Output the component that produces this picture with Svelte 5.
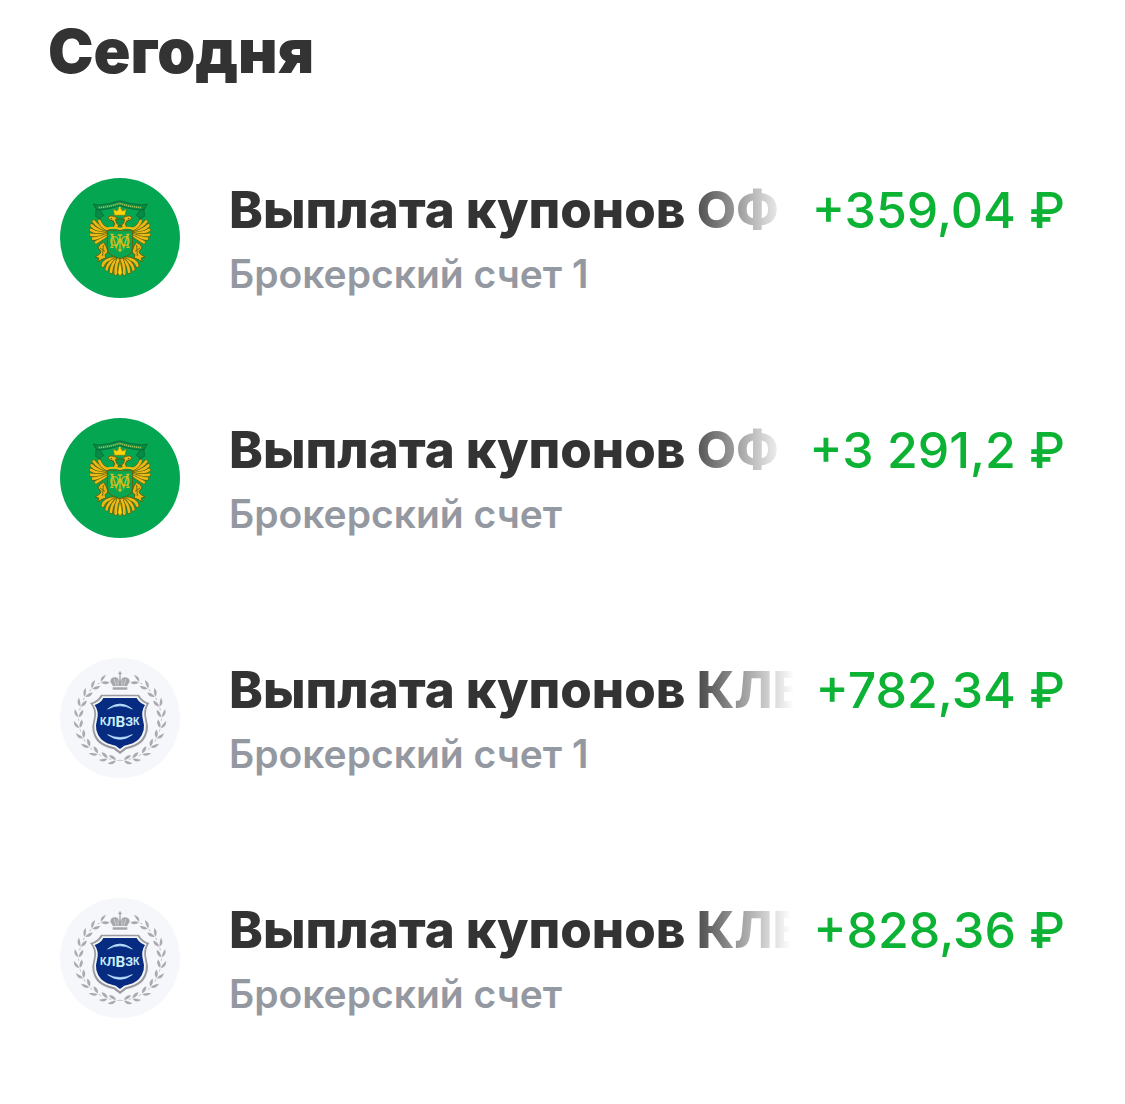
<script>
  const payments = [
    { issuer: 'ofz', title: 'Выплата купонов ОФ', account: 'Брокерский счет 1', amount: '+359,04 ₽' },
    { issuer: 'ofz', title: 'Выплата купонов ОФ', account: 'Брокерский счет', amount: '+3 291,2 ₽' },
    { issuer: 'klvz', title: 'Выплата купонов КЛВ', account: 'Брокерский счет 1', amount: '+782,34 ₽' },
    { issuer: 'klvz', title: 'Выплата купонов КЛВ', account: 'Брокерский счет', amount: '+828,36 ₽' },
  ];

  const leafAngles = [27, 42, 57, 72, 87, 102, 117, 132, 147, 162, 174];

  const feathers = [
    'M170 202 Q150 216 138 223',
    'M168 196 Q142 212 129 212',
    'M167 192 Q138 204 123 200',
    'M166 189 Q136 196 123 186',
    'M165 187 Q136 186 125 172',
    'M166 184 Q144 178 131 160',
    'M172 183 Q156 178 148 159',
  ];

  const tail = [
    'M200 272 Q164 270 158 293',
    'M202 272 Q172 282 170 304',
    'M204 273 Q184 286 183 312',
    'M206 273 Q196 292 197 317',
  ];
</script>

{#snippet eagleHalf()}
  {#each [...feathers, ...tail] as d}
    <path class="feather-edge" {d} />
    <path class="feather" {d} />
  {/each}
  <path class="gold" d="M202 181 L190 177 Q197 168 190 159 L180 156 L173 149 Q181 140 193 145 Q207 151 207 169 L202 181Z" />
  <path class="gold" d="M161 223 Q148 226 144 240 L153 250 L149 258 L135 267 L146 270 L143 282 L156 274 L168 270 L165 260 L174 252 L169 236Z" />
  <path class="ink" d="M150 240 L165 250 M160 231 L158 264" />
  <circle cx="184" cy="152" r="2" class="mark" />
{/snippet}

{#snippet ofzLogo()}
  <svg class="logo" viewBox="30 30 360 360" aria-hidden="true">
    <circle cx="210" cy="210" r="180" fill="#05a651" />
    <path class="ribbon" d="M138 124 L150 126 L161 143 L149 149 L153 154 L137 145 Z M282 124 L270 126 L259 143 L271 149 L267 154 L283 145Z" />
    <path class="ribbon" d="M130 108 L146 111 Q181 108 209 98 Q240 108 276 111 L292 108 L284 123 L269 126 Q235 123 209 113 Q181 123 151 126 L138 123Z" />
    <path d="M146 119 Q181 116 209 106 Q240 116 274 119" fill="none" stroke="#a2be50" stroke-width="5" stroke-dasharray="4 2" />
    {@render eagleHalf()}
    <g transform="matrix(-1 0 0 1 420 0)">{@render eagleHalf()}</g>
    <path d="M193 142 L190 123 L201 129 L209 117 L218 129 L229 123 L225 142Z" fill="#fcd20d" stroke="#7c7815" stroke-width="2" />
    <circle cx="209" cy="119" r="3" fill="#ffcf18" />
    <path d="M197 153 L223 153 Q224 168 210 174 Q197 168 197 153Z" fill="#099b48" stroke="#57630e" stroke-width="3" />
    <path d="M172 187 H248 V240 Q247 258 229 265 L210 272 L191 265 Q173 258 172 240Z" fill="#08a64e" stroke="#675f0c" stroke-width="3" />
    <path d="M168 183 Q192 175 210 183 Q230 175 252 183" fill="none" stroke="#f3bc10" stroke-width="6" />
    <path class="cipher" d="M186 199 V238 M181 199 H191 M181 238 H191 M234 199 V238 M229 199 H239 M229 238 H239 M188 202 L199 239 L210 211 L221 239 L232 202 M203 201 H217 M210 201 V252 M204 246 H216" />
    <ellipse class="cipher" cx="194" cy="219" rx="11" ry="13" />
    <ellipse class="cipher" cx="226" cy="219" rx="11" ry="13" />
    <path d="M210 274 L203 314 L210 325 L217 314Z" fill="#ffd10a" stroke="#7c650a" stroke-width="2" />
  </svg>
{/snippet}

{#snippet klvzLogo()}
  <svg class="logo" viewBox="30 30 360 360" aria-hidden="true">
    <circle cx="210" cy="210" r="180" fill="#f5f7fb" />
    {#each [-1, 1] as side}
      <g transform="matrix({side} 0 0 1 {side === 1 ? 0 : 420} 0)">
        {#each leafAngles as angle}
          <g class="leaf" transform="rotate({angle} 210 213)">
            <path d="M211 88 Q201 87 187 76 Q207 72 211 88Z" />
            <path d="M211 90 Q197 88 188 101 Q204 105 211 90Z" />
            <path d="M211 89 L222 91 L222 88Z" />
          </g>
        {/each}
      </g>
    {/each}
    <path d="M188 118 H232 V125 H188Z M189 114 L181 101 Q182 88 195 88 Q205 89 208 98 V85 H212 V98 Q216 88 226 88 Q239 89 239 101 L231 114Z" fill="#a5a6aa" />
    <path d="M210 70 V86 M205 76 H215" fill="none" stroke="#929397" stroke-width="3" />
    <path d="M193 93 L198 113 M227 93 L222 113 M204 94 V113 M216 94 V113" fill="none" stroke="#e4e5e8" stroke-width="2" />
    <path d="M120 165 Q142 160 153 140 H267 Q278 160 298 165 Q283 184 290 214 Q302 253 277 281 Q260 297 229 304 L210 318 L191 304 Q160 297 143 281 Q119 253 131 214 Q138 184 120 165Z" fill="#999b9f" />
    <path d="M128 168 Q148 162 157 145 H263 Q273 162 290 168 Q278 187 285 215 Q295 249 272 277 Q256 292 226 298 L210 310 L194 298 Q164 292 148 277 Q125 249 136 215 Q143 187 128 168Z" fill="#f4f5f7" />
    <path d="M134 171 Q153 165 160 150 H260 Q268 165 285 171 Q272 190 279 216 Q289 247 267 273 Q252 288 223 293 L210 303 L197 293 Q168 288 153 273 Q131 247 141 216 Q148 190 134 171Z" fill="#062b80" />
    <path d="M173 183 Q210 153 247 183 Q210 164 173 183Z M173 260 Q210 288 247 260 Q210 277 173 260Z" fill="#b9e0ff" stroke="#b9e0ff" stroke-width="2" />
    <text class="brand" x="150" y="232"><tspan font-size="30">К</tspan><tspan font-size="38" dy="3">Л</tspan><tspan font-size="46" dy="3">В</tspan><tspan font-size="38" dy="-3">З</tspan><tspan font-size="30" dy="-3">К</tspan></text>
  </svg>
{/snippet}

<main>
  <h1>Сегодня</h1>
  <ul>
    {#each payments as payment}
      <li>
        {#if payment.issuer === 'ofz'}
          {@render ofzLogo()}
        {:else}
          {@render klvzLogo()}
        {/if}
        <div class="details">
          <div class="headline">
            <h2>{payment.title}</h2>
            <span class="amount">{payment.amount}</span>
          </div>
          <p>{payment.account}</p>
        </div>
      </li>
    {/each}
  </ul>
</main>

<style>
  :global(body) {
    margin: 0;
    background: #fff;
  }
  main {
    padding: 15px 60px 80px;
    font-family: Inter, 'Liberation Sans', sans-serif;
    color: #333;
  }
  h1, h2, p, ul {
    margin: 0;
    padding: 0;
  }
  h1 {
    margin-left: -12px;
    font-size: 61px;
    line-height: 72px;
    font-weight: 900;
  }
  ul {
    display: flex;
    flex-direction: column;
    gap: 118px;
    margin-top: 91px;
    list-style: none;
  }
  li {
    display: flex;
    align-items: flex-start;
    gap: 49px;
  }
  .logo {
    flex: none;
    width: 120px;
    height: 120px;
  }
  .details {
    flex: 1;
    min-width: 0;
  }
  .headline {
    display: flex;
    gap: 22px;
    line-height: 64px;
    white-space: nowrap;
  }
  h2 {
    flex: 1;
    min-width: 0;
    overflow: hidden;
    font-size: 51px;
    font-weight: 800;
    mask-image: linear-gradient(to right, #000 calc(100% - 108px), transparent);
  }
  .amount {
    color: #0cb233;
    font-size: 50px;
    font-weight: 500;
  }
  p {
    margin-top: 6px;
    font-size: 39px;
    line-height: 52px;
    font-weight: 600;
    color: #9498a1;
  }
  .gold {
    fill: #eab617;
    stroke: #60610f;
    stroke-width: 3;
    stroke-linejoin: round;
  }
  .feather-edge,
  .feather {
    fill: none;
    stroke: #5c640f;
    stroke-width: 12;
    stroke-linecap: round;
  }
  .feather {
    stroke: #edb916;
    stroke-width: 8;
  }
  .ink {
    fill: none;
    stroke: #75680d;
    stroke-width: 3;
  }
  .mark {
    fill: #3b520f;
  }
  .ribbon {
    fill: #078b46;
    stroke: #087039;
    stroke-width: 3;
  }
  .cipher {
    fill: none;
    stroke: #d4bd20;
    stroke-width: 4;
  }
  .leaf {
    fill: #a9abb0;
  }
  .brand {
    fill: #c9edff;
    font-family: Roboto, sans-serif;
    font-weight: 700;
  }
</style>
